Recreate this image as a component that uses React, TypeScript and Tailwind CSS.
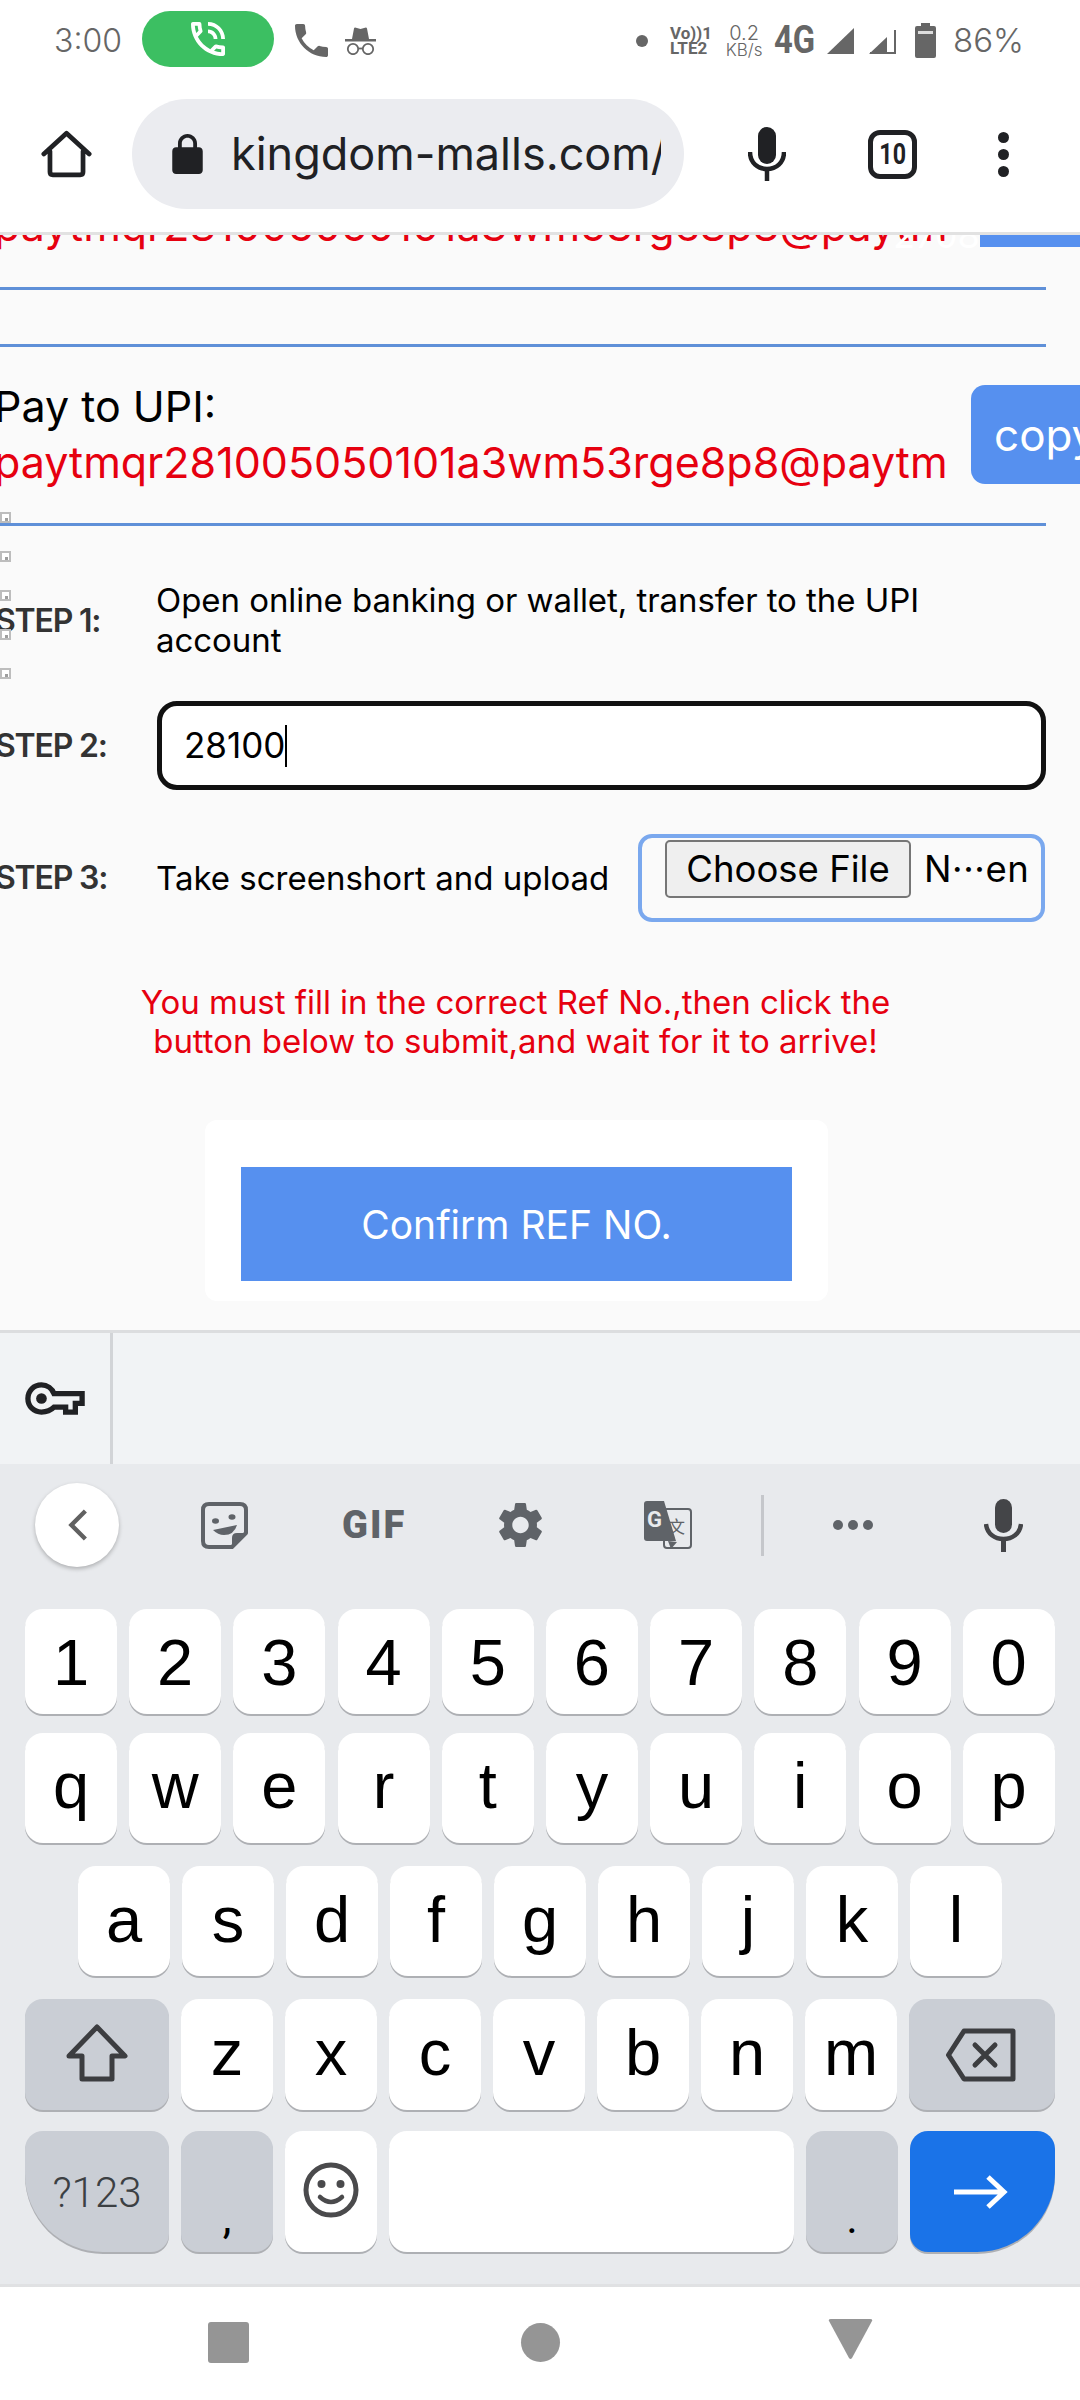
import React from "react";

const keyBase =
  "flex items-center justify-center rounded-[18px] bg-white shadow-[0_2px_0_#aeb0b4] text-[65px] leading-none text-black shrink-0 font-['Liberation_Sans',sans-serif]";
const grayKey =
  "flex items-center justify-center rounded-[18px] bg-[#caced5] shadow-[0_2px_0_#aeb0b4] shrink-0";

function KeyRow({ keys, className, keyClass }: { keys: string[]; className: string; keyClass: string }) {
  return (
    <div className={className}>
      {keys.map((k) => (
        <div key={k} className={`${keyBase} h-full w-[92px] ${keyClass}`}>
          {k}
        </div>
      ))}
    </div>
  );
}

function StatusBar() {
  return (
    <div className="flex h-[76px] items-center pt-[5px] pl-[54px] pr-[56px] text-[#666666] shrink-0">
      <span className="text-[32px] font-light leading-none w-[68px] whitespace-nowrap">3:00</span>
      <div className="ml-[20px] flex h-[56px] w-[132px] items-center justify-center rounded-full bg-[#3cbf62] -mt-[4px]">
        <svg viewBox="3 3 18 18" className="h-[34px] w-[34px] fill-white">
          <path d="M15 12h2c0-2.76-2.24-5-5-5v2c1.66 0 3 1.34 3 3zm4 0h2c0-4.97-4.03-9-9-9v2c3.87 0 7 3.13 7 7zm1 3.5c-1.25 0-2.45-.2-3.57-.57-.1-.03-.21-.05-.31-.05-.26 0-.51.1-.71.29l-2.2 2.2c-2.83-1.45-5.15-3.76-6.59-6.59l2.2-2.21c.28-.26.36-.65.25-1C8.7 6.45 8.5 5.25 8.5 4c0-.55-.45-1-1-1H4c-.55 0-1 .45-1 1 0 9.39 7.61 17 17 17 .55 0 1-.45 1-1v-3.5c0-.55-.45-1-1-1zM5.03 5h1.5c.07.88.22 1.75.45 2.58l-1.2 1.21c-.4-1.21-.66-2.47-.75-3.79zM19 18.97c-1.32-.09-2.6-.35-3.8-.76l1.2-1.2c.85.24 1.72.39 2.6.45v1.51z" />
        </svg>
      </div>
      <svg viewBox="3 3 18 18" className="ml-[21px] h-[33px] w-[33px] fill-[#666666]">
        <path d="M6.62 10.79c1.44 2.83 3.76 5.14 6.59 6.59l2.2-2.2c.27-.27.67-.36 1.02-.24 1.12.37 2.33.57 3.57.57.55 0 1 .45 1 1V20c0 .55-.45 1-1 1-9.39 0-17-7.61-17-17 0-.55.45-1 1-1h3.5c.55 0 1 .45 1 1 0 1.25.2 2.45.57 3.57.11.35.03.74-.25 1.02l-2.2 2.2z" />
      </svg>
      <svg viewBox="0 0 31 28" className="ml-[17px] h-[28px] w-[31px]">
        <path d="M7 12 L9 1.5 Q9.5 0 11 .8 L15.5 2 L20 .8 Q21.500 0 22 1.500 L24 12 Z" fill="#666666" />
        <rect x="0" y="12" width="31" height="2.500" fill="#666666" />
        <circle cx="8" cy="22" r="5.200" fill="none" stroke="#666666" strokeWidth="1.800" />
        <circle cx="23" cy="22" r="5.200" fill="none" stroke="#666666" strokeWidth="1.800" />
        <path d="M13 21.500h5" stroke="#666666" strokeWidth="1.800" />
      </svg>
      <div className="ml-auto flex items-center">
        <div className="h-[12px] w-[12px] rounded-full bg-[#666666]" />
        <div className="ml-[22px] flex flex-col items-start text-[17px] font-bold leading-[15px] w-[40px] whitespace-nowrap font-[Roboto,sans-serif]">
          <span>Vo))1</span>
          <span>LTE2</span>
        </div>
        <div className="ml-[15px] flex flex-col items-center w-[38px] leading-none whitespace-nowrap">
          <span className="text-[20px] leading-[18px] font-light">0.2</span>
          <span className="text-[17px] leading-[16px] font-light">KB/s</span>
        </div>
        <span className="ml-[11px] w-[42px] text-[39px] font-bold leading-none scale-x-[0.84] origin-left whitespace-nowrap font-[Roboto,sans-serif]">
          4G
        </span>
        <svg viewBox="0 0 27 26" className="ml-[11px] h-[26px] w-[27px] fill-[#666666]">
          <path d="M27 0V26H0Z" />
        </svg>
        <svg viewBox="0 0 27 26" className="ml-[15px] h-[26px] w-[27px]">
          <path d="M18 9 V26 H0 Z" fill="#666666" />
          <path d="M26 2 V25 H1" fill="none" stroke="#666666" strokeWidth="2" />
        </svg>
        <svg viewBox="0 0 21 35" className="ml-[19px] h-[35px] w-[21px]">
          <path d="M6 0h9v3h4a2 2 0 0 1 2 2v28a2 2 0 0 1-2 2H2a2 2 0 0 1-2-2V5a2 2 0 0 1 2-2h4Z" fill="#666666" />
          <rect x="3" y="8" width="15" height="3" fill="#dddddd" />
        </svg>
        <span className="ml-[17px] text-[33px] font-light leading-none whitespace-nowrap">86%</span>
      </div>
    </div>
  );
}

function Toolbar() {
  return (
    <div className="flex h-[156px] items-center shrink-0">
      <svg viewBox="0 0 54 50" className="ml-[41px] h-[48px] w-[51px] fill-none stroke-[#202124] stroke-[5px]" strokeLinejoin="round" strokeLinecap="round">
        <path d="M3 25 L27 3 L51 25 M9.500 22 V44 Q9.500 47 12.500 47 H41.500 Q44.500 47 44.500 44 V22" />
      </svg>
      <div className="ml-[40px] flex h-[110px] w-[552px] items-center rounded-full bg-[#ebecf0]">
        <svg viewBox="4 1 16 21" className="ml-[40px] h-[40px] w-[31px] fill-[#202124]">
          <path d="M18 8h-1V6c0-2.760-2.240-5-5-5S7 3.240 7 6v2H6c-1.100 0-2 .9-2 2v10c0 1.100.9 2 2 2h12c1.100 0 2-.9 2-2V10c0-1.100-.9-2-2-2zM9 6c0-1.660 1.340-3 3-3s3 1.340 3 3v2H9V6z" />
        </svg>
        <div className="ml-[28px] w-[430px] overflow-hidden whitespace-nowrap text-[45px] leading-[60px] text-[#202124]">
          kingdom-malls.com/
        </div>
      </div>
      <svg viewBox="0 0 38 54" className="ml-[64px] h-[54px] w-[38px]">
        <rect x="10" y="0" width="18" height="37" rx="9" fill="#202124" />
        <path d="M2 25 C2 36 10 42 19 42 C28 42 36 36 36 25" fill="none" stroke="#202124" strokeWidth="4.500" />
        <path d="M19 41 V54" stroke="#202124" strokeWidth="4.500" />
      </svg>
      <div className="ml-[82px] flex h-[49px] w-[49px] items-center justify-center rounded-[12px] border-[5px] border-[#202124] leading-none text-[#202124] font-[Roboto,sans-serif]">
        <span className="text-[29px] font-bold scale-x-[0.8]">10</span>
      </div>
      <div className="ml-[81px] flex flex-col gap-[6px]">
        <div className="h-[11px] w-[11px] rounded-full bg-[#202124]" />
        <div className="h-[11px] w-[11px] rounded-full bg-[#202124]" />
        <div className="h-[11px] w-[11px] rounded-full bg-[#202124]" />
      </div>
    </div>
  );
}

function UpiBlock({ label, square, copy }: { label: string; square?: boolean; copy?: boolean }) {
  return (
    <div className="flex h-[99px] items-start">
      <div className="-ml-[6px] -mt-[7px] w-[977px] shrink-0 whitespace-nowrap text-[43px]">
        <div className="h-[56px] leading-[56px] text-black">{label}</div>
        <div className="h-[56px] leading-[56px] text-[#e6000f]">paytmqr281005050101a3wm53rge8p8@paytm</div>
      </div>
      {square ? (
        <div className="ml-[9px] h-full grow bg-[#5690ef]" />
      ) : (
        <div className="flex h-full grow items-center overflow-hidden rounded-l-[14px] bg-[#5690ef] pl-[23px] text-[44px] leading-none text-white whitespace-nowrap">
          {copy ? "copy" : ""}
        </div>
      )}
    </div>
  );
}

const stepLabel =
  "-ml-[5px] w-[162px] shrink-0 text-[32px] font-semibold leading-none tracking-[-1.2px] text-[#333333] whitespace-nowrap";

function Page() {
  const line = "h-[3px] w-[1046px] bg-[#5f90d8]";
  return (
    <div className="relative h-[1098px] shrink-0 overflow-hidden border-t-[3px] border-[#e2e2e2] bg-[#fafafa] font-[Inter,sans-serif]">
      <div className="-mt-[87px]">
        <UpiBlock label="Pay to UPI:" square />
      </div>
      <div className={`mt-[40px] ${line}`} />
      <div className={`mt-[54px] ${line}`} />
      <div className="mt-[38px]">
        <UpiBlock label="Pay to UPI:" copy />
      </div>
      <div className={`mt-[39px] ${line}`} />

      <div className="mt-[54px] flex items-center">
        <div className={`${stepLabel} pt-[1px]`}>STEP 1:</div>
        <div className="w-[889px] -ml-[1px] text-[33px] leading-[40px] tracking-[-0.06px] text-black">
          Open online banking or wallet, transfer to the UPI account
        </div>
      </div>

      <div className="mt-[41px] flex items-center">
        <div className={`${stepLabel} pt-[1px]`}>STEP 2:</div>
        <div className="flex h-[89px] w-[889px] items-center rounded-[20px] border-[5px] border-[#111111] bg-white pl-[22px] text-[35px] leading-none text-black">
          <span>28100</span>
          <span className="h-[42px] w-[2px] bg-black" />
        </div>
      </div>

      <div className="mt-[44px] flex items-center">
        <div className={stepLabel}>STEP 3:</div>
        <div className="w-[481px] shrink-0 -ml-[1px] text-[33px] leading-none text-black whitespace-nowrap">
          Take screenshort and upload
        </div>
        <div className="flex h-[88px] w-[407px] items-start rounded-[14px] border-[4px] border-[#7aa8ee] pl-[23px] pt-[2px] text-[36.5px] leading-none text-black ml-[1px]">
          <div className="flex h-[58px] w-[246px] items-center justify-center rounded-[5px] border-2 border-[#767676] bg-[#efefef] whitespace-nowrap">
            Choose File
          </div>
          <span className="ml-[13px] mt-[11px] whitespace-nowrap tracking-[0.6px]">N···en</span>
        </div>
      </div>

      <div className="mt-[61px] w-[1031px] text-center text-[33px] leading-[39px] tracking-[-0.03px] text-[#e6000f]">
        You must fill in the correct Ref No.,then click the
        <br />
        button below to submit,and wait for it to arrive!
      </div>

      <div className="mt-[59px] ml-[205px] h-[181px] w-[623px] rounded-[12px] bg-white px-[36px] pt-[47px]">
        <div className="flex h-[114px] w-full items-center justify-center bg-[#5690ef] text-[39px] leading-none text-white">
          Confirm REF NO.
        </div>
      </div>

      <div className="absolute left-0 top-[277px] flex flex-col gap-[28px]">
        {[0, 1, 2, 3, 4].map((i) => (
          <div key={i} className="relative h-[11px] w-[11px] border-2 border-[#bdbdbd] bg-white">
            <div className="absolute bottom-0 right-[1px] h-[3px] w-[3px] bg-[#9e9e9e]" />
          </div>
        ))}
      </div>
      <div className="absolute left-[893px] top-[-20px] text-[36px] leading-[40px] text-white whitespace-nowrap">2708</div>
    </div>
  );
}

function KeyboardTools() {
  const c = "#5f6368";
  return (
    <div className="flex h-[122px] items-center">
      <div className="ml-[35px] flex h-[84px] w-[84px] items-center justify-center rounded-full bg-white shadow-[0_2px_4px_rgba(0,0,0,0.25)]">
        <svg viewBox="0 0 24 36" className="h-[32px] w-[21px] fill-none stroke-[#616161] stroke-[5px]">
          <path d="M21 2 L5 18 L21 34" />
        </svg>
      </div>
      <svg viewBox="0 0 47 47" className="ml-[82px] h-[47px] w-[47px]">
        <path d="M8 2 H39 Q45 2 45 8 V31 L31 45 H8 Q2 45 2 39 V8 Q2 2 8 2 Z" fill="none" stroke={c} strokeWidth="4" strokeLinejoin="round" />
        <path d="M45 31 H36 Q31 31 31 36 V45 Z" fill={c} />
        <ellipse cx="14.500" cy="19" rx="3.500" ry="2.800" fill={c} />
        <ellipse cx="31" cy="15" rx="3.500" ry="2.800" fill={c} />
        <path d="M12 28 L36 23 Q33 33 23 33 Q17 33 12 28 Z" fill={c} />
      </svg>
      <span className="ml-[94px] w-[62px] text-center text-[38px] font-black leading-none tracking-[2px] whitespace-nowrap text-[#5f6368] font-[Roboto,sans-serif]">
        GIF
      </span>
      <svg viewBox="2.300 1.500 19.400 21" className="ml-[94px] h-[48px] w-[45px] fill-[#5f6368]">
        <path d="M19.140 12.940c.04-.3.06-.61.06-.94 0-.32-.02-.64-.07-.94l2.030-1.580c.18-.14.23-.41.12-.61l-1.920-3.320c-.12-.22-.37-.29-.59-.22l-2.390.96c-.5-.38-1.030-.7-1.620-.94l-.36-2.540c-.04-.24-.24-.41-.48-.41h-3.840c-.24 0-.43.17-.47.41l-.36 2.540c-.59.24-1.130.57-1.620.94l-2.390-.96c-.22-.08-.47 0-.59.22L2.740 8.870c-.12.21-.08.47.12.61l2.030 1.580c-.05.3-.09.63-.09.94s.02.64.07.94l-2.030 1.580c-.18.14-.23.41-.12.61l1.920 3.320c.12.22.37.29.59.22l2.390-.96c.5.38 1.030.7 1.620.94l.36 2.540c.05.24.24.41.48.41h3.840c.24 0 .44-.17.47-.41l.36-2.540c.59-.24 1.130-.56 1.620-.94l2.390.96c.22.08.47 0 .59-.22l1.920-3.320c.12-.22.07-.47-.12-.61l-2.010-1.580zM12 15.600c-1.980 0-3.600-1.620-3.600-3.600s1.620-3.600 3.600-3.600 3.600 1.620 3.600 3.600-1.620 3.600-3.600 3.600z" />
      </svg>
      <svg viewBox="0 0 48 49" className="ml-[101px] h-[49px] w-[48px]">
        <rect x="20" y="8" width="27" height="39" rx="3" fill="none" stroke={c} strokeWidth="2" />
        <path d="M3 0 H20 L32 40 H3 Q0 40 0 37 V3 Q0 0 3 0 Z" fill={c} />
        <path d="M24 40 L27 48 L33 41 Z" fill={c} />
        <text x="3" y="26" fontFamily="Roboto, sans-serif" fontWeight="700" fontSize="22" fill="#e8eaed">G</text>
        <text x="24" y="32" fontFamily="'Noto Sans CJK SC', sans-serif" fontSize="17" fill={c}>文</text>
      </svg>
      <div className="ml-[69px] h-[61px] w-[3px] bg-[#c5c7cb]" />
      <div className="ml-[69px] flex gap-[5px]">
        <div className="h-[10px] w-[10px] rounded-full bg-[#5f6368]" />
        <div className="h-[10px] w-[10px] rounded-full bg-[#5f6368]" />
        <div className="h-[10px] w-[10px] rounded-full bg-[#5f6368]" />
      </div>
      <svg viewBox="0 0 39 53" className="ml-[111px] h-[53px] w-[39px]">
        <rect x="11" y="0" width="17" height="34" rx="8.500" fill="#444548" />
        <path d="M2 25 C3 35 11 40 19.500 40 C28 40 36 35 37 25" fill="none" stroke="#444548" strokeWidth="4.500" />
        <path d="M19.500 39 V53" stroke="#444548" strokeWidth="5" />
      </svg>
    </div>
  );
}

function Keyboard() {
  return (
    <div className="flex h-[954px] shrink-0 flex-col bg-[#e8eaed] font-[Roboto,sans-serif]">
      <div className="flex h-[134px] shrink-0 border-t-[3px] border-[#dcdddf] bg-[#f1f3f5]">
        <div className="flex h-full w-[113px] items-start border-r-[3px] border-[#d2d4d7] pl-[25px] pt-[49px]">
          <svg viewBox="0 0 62 34" className="h-[33px] w-[60px]">
            <path d="M17 3 C23 3 28 7 30 12 H59 V22 H52 V31 H42 V26 H30 C28 28 23 31 17 31 C9 31 3 25 3 17 C3 9 9 3 17 3 Z" fill="#f1f3f5" stroke="#202124" strokeWidth="5.500" />
            <circle cx="17" cy="17" r="5.500" fill="#202124" />
          </svg>
        </div>
      </div>
      <KeyboardTools />
      <div className="mt-[23px] h-[105px]">
        <KeyRow keyClass="pt-[1px]" keys={["1", "2", "3", "4", "5", "6", "7", "8", "9", "0"]} className="flex h-full gap-[12.2px] pl-[25px]" />
      </div>
      <div className="mt-[19px] h-[110px]">
        <KeyRow keyClass="pb-[5px]" keys={["q", "w", "e", "r", "t", "y", "u", "i", "o", "p"]} className="flex h-full gap-[12.2px] pl-[25px]" />
      </div>
      <div className="mt-[23px] h-[110px]">
        <KeyRow keyClass="pb-[4px]" keys={["a", "s", "d", "f", "g", "h", "j", "k", "l"]} className="flex h-full gap-[12px] pl-[78px]" />
      </div>
      <div className="mt-[23px] flex h-[111px] gap-[12px] pl-[25px]">
        <div className={`${grayKey} h-full w-[144px]`}>
          <svg viewBox="0 0 62 58" className="-mt-[3px] h-[60px] w-[62px] fill-none stroke-[#3c3d40] stroke-[5px]" strokeLinejoin="round">
            <path d="M31 3 L59 32 H46 V55 H16 V32 H3 Z" />
          </svg>
        </div>
        {["z", "x", "c", "v", "b", "n", "m"].map((k) => (
          <div key={k} className={`${keyBase} h-full w-[92px] pb-[4px]`}>
            {k}
          </div>
        ))}
        <div className={`${grayKey} h-full w-[146px]`}>
          <svg viewBox="0 0 70 54" className="-ml-[2px] h-[54px] w-[70px] fill-none stroke-[#3c3d40] stroke-[5px]" strokeLinejoin="round" strokeLinecap="round">
            <path d="M2.500 27 L18 3 H67 V51 H18 Z" />
            <path d="M29 17 L49 37 M49 17 L29 37" />
          </svg>
        </div>
      </div>
      <div className="mt-[21px] flex h-[121px] gap-[12px] pl-[25px]">
        <div className={`${grayKey} h-full w-[144px] rounded-bl-[78px] pt-[3px] text-[42px] font-light leading-none text-[#3c4043]`}>?123</div>
        <div className={`${grayKey} h-full w-[92px] items-end text-[44px] leading-none text-black pb-[12px]`}>,</div>
        <div className={`${keyBase} h-full w-[92px]`}>
          <svg viewBox="0 0 56 56" className="h-[56px] w-[56px] -mt-[4px]">
            <circle cx="28" cy="28" r="25" fill="none" stroke="#4a4a4c" strokeWidth="5" />
            <circle cx="18.500" cy="22" r="4" fill="#4a4a4c" />
            <circle cx="37.500" cy="22" r="4" fill="#4a4a4c" />
            <path d="M17 35 Q28 45 39 35" fill="none" stroke="#4a4a4c" strokeWidth="4.500" strokeLinecap="round" />
          </svg>
        </div>
        <div className={`${keyBase} h-full w-[405px]`} />
        <div className={`${grayKey} h-full w-[92px] items-end text-[44px] leading-none text-black pb-[12px]`}>.</div>
        <div className="flex h-full w-[145px] shrink-0 items-center justify-center rounded-[18px] rounded-br-[78px] bg-[#1a73e8] shadow-[0_2px_0_#aeb0b4]">
          <svg viewBox="0 0 54 34" className="-ml-[3px] h-[34px] w-[54px] fill-none stroke-white stroke-[5px]">
            <path d="M0 17 H50 M34 2 L50 17 L34 32" />
          </svg>
        </div>
      </div>
    </div>
  );
}

function NavBar() {
  return (
    <div className="flex h-[116px] shrink-0 items-center border-t-[3px] border-[#e0e1e3] bg-white pb-[3px]">
      <div className="ml-[208px] h-[41px] w-[41px] rounded-[3px] bg-[#959595]" />
      <div className="ml-[272px] h-[39px] w-[39px] rounded-full bg-[#959595]" />
      <svg viewBox="0 0 45 40" className="-mt-[6px] ml-[268px] h-[40px] w-[45px] fill-[#959595]">
        <path d="M1 2 Q0 0 3 0 H42 Q45 0 44 2 L24 39 Q22.500 41 21 39 Z" />
      </svg>
    </div>
  );
}

export default function App() {
  return (
    <div className="flex h-[2400px] w-[1080px] flex-col overflow-hidden bg-white font-[Inter,sans-serif]">
      <StatusBar />
      <Toolbar />
      <Page />
      <Keyboard />
      <NavBar />
    </div>
  );
}
